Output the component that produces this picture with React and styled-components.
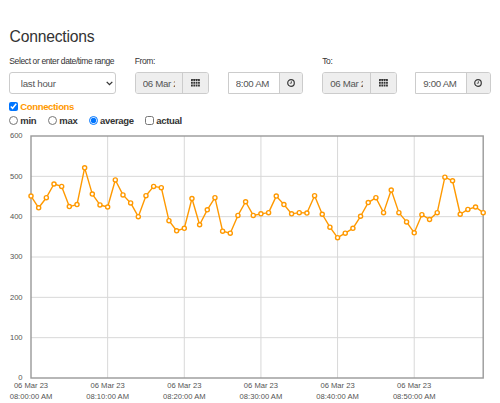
import React, { useState } from 'react';
import styled, { createGlobalStyle } from 'styled-components';

const values = [
    451, 422, 447, 481, 475, 425, 430, 521, 456, 429,
    424, 491, 454, 434, 400, 452, 475, 472, 390, 365,
    371, 445, 380, 417, 447, 364, 359, 403, 437, 403,
    407, 410, 451, 430, 407, 410, 409, 452, 406, 374,
    348, 359, 371, 401, 435, 447, 410, 466, 410, 387,
    360, 405, 393, 410, 498, 489, 406, 418, 424, 410,
];

const PLOT = { left: 31, top: 8, right: 483.2, bottom: 250 };
const STEP = (PLOT.right - PLOT.left) / (values.length - 1);
const toX = (minute) => PLOT.left + minute * STEP;
const toY = (value) => PLOT.bottom - (value / 600) * (PLOT.bottom - PLOT.top);

const GridIcon = () => (
    <svg width="9" height="8" viewBox="0 0 9 8" fill="#333">
        {[0, 2.75, 5.5].map(y => [0, 2.35, 4.7, 7.05].map(x => (
            <rect key={`${x}-${y}`} x={x} y={y} width="1.8" height="1.9" rx="0.2" />
        )))}
    </svg>
);

const ClockIcon = () => (
    <svg width="8" height="8" viewBox="0 0 8 8" fill="none" stroke="#3a3a3a">
        <circle cx="4" cy="4" r="3.3" strokeWidth="1.2" />
        <path d="M4.4 2.2V4.2H2.8" strokeWidth="0.8" />
    </svg>
);

const DateField = ({ value }) => (
    <Group $width={74.5}>
        <DateInput defaultValue={value} readOnly />
        <Addon $width={26}><GridIcon /></Addon>
    </Group>
);

const TimeField = ({ value }) => (
    <Group $width={75.3} $square>
        <TimeInput defaultValue={value} />
        <Addon $width={23.5}><ClockIcon /></Addon>
    </Group>
);

const Chart = () => (
    <ChartSvg width="500" height="275" viewBox="0 0 500 275">
        {[100, 200, 300, 400, 500].map(v => (
            <GridLine key={v} x1={PLOT.left} x2={PLOT.right} y1={toY(v)} y2={toY(v)} />
        ))}
        {[10, 20, 30, 40, 50].map(m => (
            <GridLine key={m} x1={toX(m)} x2={toX(m)} y1={PLOT.top} y2={PLOT.bottom} />
        ))}
        <Frame x={PLOT.left} y={PLOT.top} width={PLOT.right - PLOT.left} height={PLOT.bottom - PLOT.top} />
        <Series points={values.map((v, i) => `${toX(i)},${toY(v)}`).join(' ')} />
        {values.map((v, i) => <Marker key={i} cx={toX(i)} cy={toY(v)} r="2.05" />)}
        {[0, 100, 200, 300, 400, 500, 600].map(v => (
            <AxisText key={v} x="22.6" y={toY(v) + 2.3} textAnchor="end">{v}</AxisText>
        ))}
        {['00', '10', '20', '30', '40', '50'].map((m, i) => (
            <g key={m}>
                <AxisText x={toX(i * 10)} y="260.4" textAnchor="middle">06 Mar 23</AxisText>
                <AxisText x={toX(i * 10)} y="271.2" textAnchor="middle">{`08:${m}:00 AM`}</AxisText>
            </g>
        ))}
    </ChartSvg>
);

export default function App() {
    const [mode, setMode] = useState('average');

    return (
        <Page>
            <GlobalStyle />
            <Title>Connections</Title>
            <Filters>
                <Column $width={125.4}>
                    <Label>Select or enter date/time range</Label>
                    <SelectWrapper>
                        <Select defaultValue="hour">
                            <option value="hour">last hour</option>
                        </Select>
                        <Chevron width="7" height="5" viewBox="0 0 7 5">
                            <path d="M0.7 0.9L3.5 3.7L6.3 0.9" fill="none" stroke="#333" strokeWidth="1.3" />
                        </Chevron>
                    </SelectWrapper>
                </Column>
                <Column $width={187.5}>
                    <Label>From:</Label>
                    <Fields>
                        <DateField value="06 Mar 23" />
                        <TimeField value="8:00 AM" />
                    </Fields>
                </Column>
                <Column $width={170}>
                    <Label>To:</Label>
                    <Fields>
                        <DateField value="06 Mar 23" />
                        <TimeField value="9:00 AM" />
                    </Fields>
                </Column>
            </Filters>
            <SeriesToggle>
                <Check type="checkbox" defaultChecked />
                Connections
            </SeriesToggle>
            <Modes>
                {[['min', 39], ['max', 40.7], ['average', 56.3]].map(([name, width]) => (
                    <Mode key={name} $width={width}>
                        <Check type="radio" name="mode" checked={mode === name} onChange={() => setMode(name)} />
                        {name}
                    </Mode>
                ))}
                <Mode $width={40}>
                    <Check type="checkbox" />
                    actual
                </Mode>
            </Modes>
            <Chart />
        </Page>
    );
}

const GlobalStyle = createGlobalStyle`
    * {
        box-sizing: border-box;
    }
    body {
        margin: 0;
        background: #fff;
        overflow: hidden;
    }
`

const Page = styled.div`
    width: 500px;
    height: 403px;
    padding-top: 27px;
    overflow: hidden;
    font-family: "Liberation Sans", Arial, sans-serif;
    font-size: 9.7px;
    color: #333;
`

const Title = styled.h1`
    margin: 0 0 9px 9.5px;
    font-size: 15.7px;
    font-weight: 400;
    line-height: 20px;
    letter-spacing: -0.2px;
`

const Filters = styled.div`
    display: flex;
    padding-left: 9.3px;
`

const Column = styled.div`
    flex: none;
    width: ${props => props.$width}px;
`

const Label = styled.div`
    height: 16.3px;
    font-size: 8.5px;
    line-height: 11px;
    letter-spacing: -0.38px;
    white-space: nowrap;
`

const Fields = styled.div`
    display: flex;
    gap: 18.6px;
`

const SelectWrapper = styled.div`
    position: relative;
    width: 106.6px;
`

const Select = styled.select`
    display: block;
    appearance: none;
    width: 100%;
    height: 22px;
    padding: 0 10.5px;
    border: 1px solid #ccc;
    border-radius: 3px;
    background: #fff;
    color: #555;
    font: inherit;
    letter-spacing: -0.26px;
`

const Chevron = styled.svg`
    position: absolute;
    right: 2.7px;
    top: 8.5px;
    pointer-events: none;
`

const Group = styled.div`
    display: flex;
    width: ${props => props.$width}px;
    height: 22px;
    border: 1px solid #ccc;
    border-radius: ${props => props.$square ? '0 3px 3px 0' : '3px'};
    overflow: hidden;
`

const TimeInput = styled.input`
    flex: 1;
    min-width: 0;
    padding: 0 7px 0 7px;
    border: 0;
    background: #fff;
    color: #555;
    font: inherit;
    letter-spacing: -0.32px;
`

const DateInput = styled(TimeInput)`
    background: #eee;
`

const Addon = styled.div`
    display: flex;
    flex: none;
    align-items: center;
    justify-content: center;
    width: ${props => props.$width}px;
    border-left: 1px solid #ccc;
    background: #eee;
`

const Check = styled.input`
    flex: none;
    width: 9px;
    height: 9px;
    margin: 0 2px 0 0;
`

const SeriesToggle = styled.label`
    display: flex;
    align-items: center;
    width: 80px;
    height: 12px;
    margin: 6px 0 0 9.3px;
    color: #ff9900;
    font-size: 9.5px;
    font-weight: 700;
    letter-spacing: -0.35px;
`

const Modes = styled.div`
    display: flex;
    height: 12px;
    margin: 2.5px 0 0 9.3px;
    font-size: 9.5px;
    font-weight: 700;
    letter-spacing: -0.3px;
`

const Mode = styled.label`
    display: flex;
    align-items: center;
    flex: none;
    width: ${props => props.$width}px;
`

const ChartSvg = styled.svg`
    display: block;
    margin-top: 1px;
`

const GridLine = styled.line`
    stroke: #d8d8d8;
    stroke-width: 1;
`

const Frame = styled.rect`
    fill: none;
    stroke: #999;
    stroke-width: 1.4;
`

const Series = styled.polyline`
    fill: none;
    stroke: #ff9900;
    stroke-width: 1.4;
    stroke-linejoin: round;
`

const Marker = styled.circle`
    fill: #fff;
    stroke: #ff9900;
    stroke-width: 1.4;
`

const AxisText = styled.text`
    fill: #545454;
    font-size: 7.6px;
`
